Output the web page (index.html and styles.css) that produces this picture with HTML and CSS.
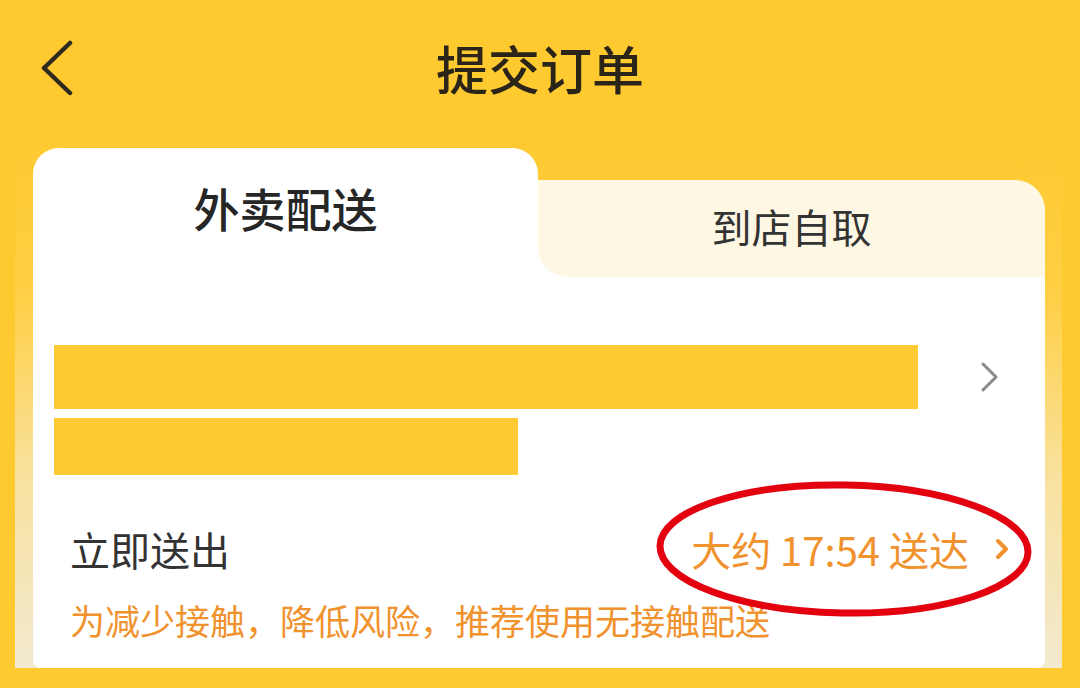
FILE: index.html
```html
<!DOCTYPE html>
<html lang="zh-CN">
<head>
<meta charset="utf-8">
<title>提交订单</title>
<link rel="stylesheet" href="styles.css">
</head>
<body>
<div class="page">
  <header class="header">
    <svg class="back" width="34" height="56" viewBox="0 0 34 56"><polyline points="30,3 4,28 30,53" fill="none" stroke="#2f2a1f" stroke-width="4.5" stroke-linecap="round" stroke-linejoin="round"/></svg>
    <h1 class="title">提交订单</h1>
    <span class="spacer"></span>
  </header>
  <div class="wrap">
    <div class="card">
      <div class="tabs">
        <div class="tab tab-active">外卖配送</div>
        <div class="tab-slot"><div class="tab tab-idle">到店自取</div></div>
      </div>
      <div class="body">
        <div class="address">
          <div class="bars">
            <div class="bar bar-long"></div>
            <div class="bar bar-short"></div>
          </div>
          <svg class="arrow" width="20" height="32" viewBox="0 0 20 32"><polyline points="3,3 16,16 3,29" fill="none" stroke="#8a8a8a" stroke-width="3" stroke-linecap="round" stroke-linejoin="round"/></svg>
        </div>
        <div class="delivery">
          <span class="label">立即送出</span>
          <span class="time">大约 17:54 送达
            <svg class="time-arrow" width="14" height="22" viewBox="0 0 14 22"><polyline points="3,3 11,11 3,19" fill="none" stroke="#f0922e" stroke-width="4" stroke-linecap="round" stroke-linejoin="round"/></svg>
            <svg class="ring" width="378" height="140" viewBox="0 0 378 140"><ellipse cx="189" cy="68" rx="184" ry="64" fill="none" stroke="#e3000f" stroke-width="7" transform="rotate(1 189 68)"/></svg>
          </span>
        </div>
        <p class="tip">为减少接触，降低风险，推荐使用无接触配送</p>
      </div>
    </div>
  </div>
</div>
</body>
</html>
```

FILE: styles.css
```css
html, body {
  margin: 0;
  padding: 0;
}
body {
  width: 1080px;
  height: 688px;
  overflow: hidden;
  background: #ffca30;
  font-family: "Noto Sans CJK SC", "Noto Sans", sans-serif;
  color: #333;
}
.page {
  width: 1080px;
  height: 688px;
}
.header {
  height: 136px;
  display: grid;
  grid-template-columns: 1fr auto 1fr;
  align-items: center;
}
.back {
  justify-self: start;
  margin-left: 40px;
  display: block;
}
.title {
  margin: 0;
  font-size: 52px;
  font-weight: 500;
  color: #2a2419;
  line-height: 72px;
  letter-spacing: 0;
}
.wrap {
  margin: 0 18px 0 15px;
  padding: 12px 17px 0 18px;
  background: linear-gradient(to bottom, #ffca30 0%, #ffcf45 30%, #f8e2a0 65%, #f2e9cf 100%);
}
.card {
  display: flex;
  flex-direction: column;
}
.tabs {
  display: flex;
  height: 129px;
}
.tab-active {
  width: 505px;
  box-sizing: border-box;
  padding-bottom: 12px;
  background: #fff;
  border-radius: 26px 26px 0 0;
  display: flex;
  align-items: center;
  justify-content: center;
  font-size: 46px;
  font-weight: 500;
  color: #262626;
}
.tab-slot {
  flex: 1;
  align-self: flex-end;
  height: 97px;
  background: linear-gradient(to bottom, transparent 50%, #fff 50%);
}
.tab-idle {
  height: 100%;
  box-sizing: border-box;
  padding-bottom: 6px;
  background: #fef7e4;
  border-radius: 0 30px 0 30px;
  display: flex;
  align-items: center;
  justify-content: center;
  font-size: 40px;
  color: #333;
}
.body {
  background: #fff;
  height: 391px;
  box-sizing: border-box;
  padding-top: 68px;
  border-radius: 0 0 8px 8px;
}
.address {
  display: flex;
  align-items: flex-start;
  padding: 0 45px 0 21px;
}
.bars {
  display: flex;
  flex-direction: column;
  gap: 9px;
}
.bar {
  background: #ffcb33;
}
.bar-long {
  width: 864px;
  height: 64px;
}
.bar-short {
  width: 464px;
  height: 57px;
}
.arrow {
  margin-left: auto;
  margin-top: 16px;
  display: block;
}
.delivery {
  margin-top: 46px;
  padding: 0 36px 0 37px;
  display: flex;
  align-items: center;
  justify-content: space-between;
  height: 56px;
}
.label {
  font-size: 40px;
  line-height: 56px;
  color: #333;
}
.time {
  position: relative;
  display: flex;
  align-items: center;
  gap: 26px;
  font-size: 40px;
  line-height: 56px;
  color: #f0922e;
}
.time-arrow {
  display: block;
}
.ring {
  position: absolute;
  left: -36px;
  top: -40px;
  pointer-events: none;
}
.tip {
  margin: 20px 0 0;
  padding-left: 37px;
  font-size: 35px;
  line-height: 46px;
  color: #f0922e;
}
```
